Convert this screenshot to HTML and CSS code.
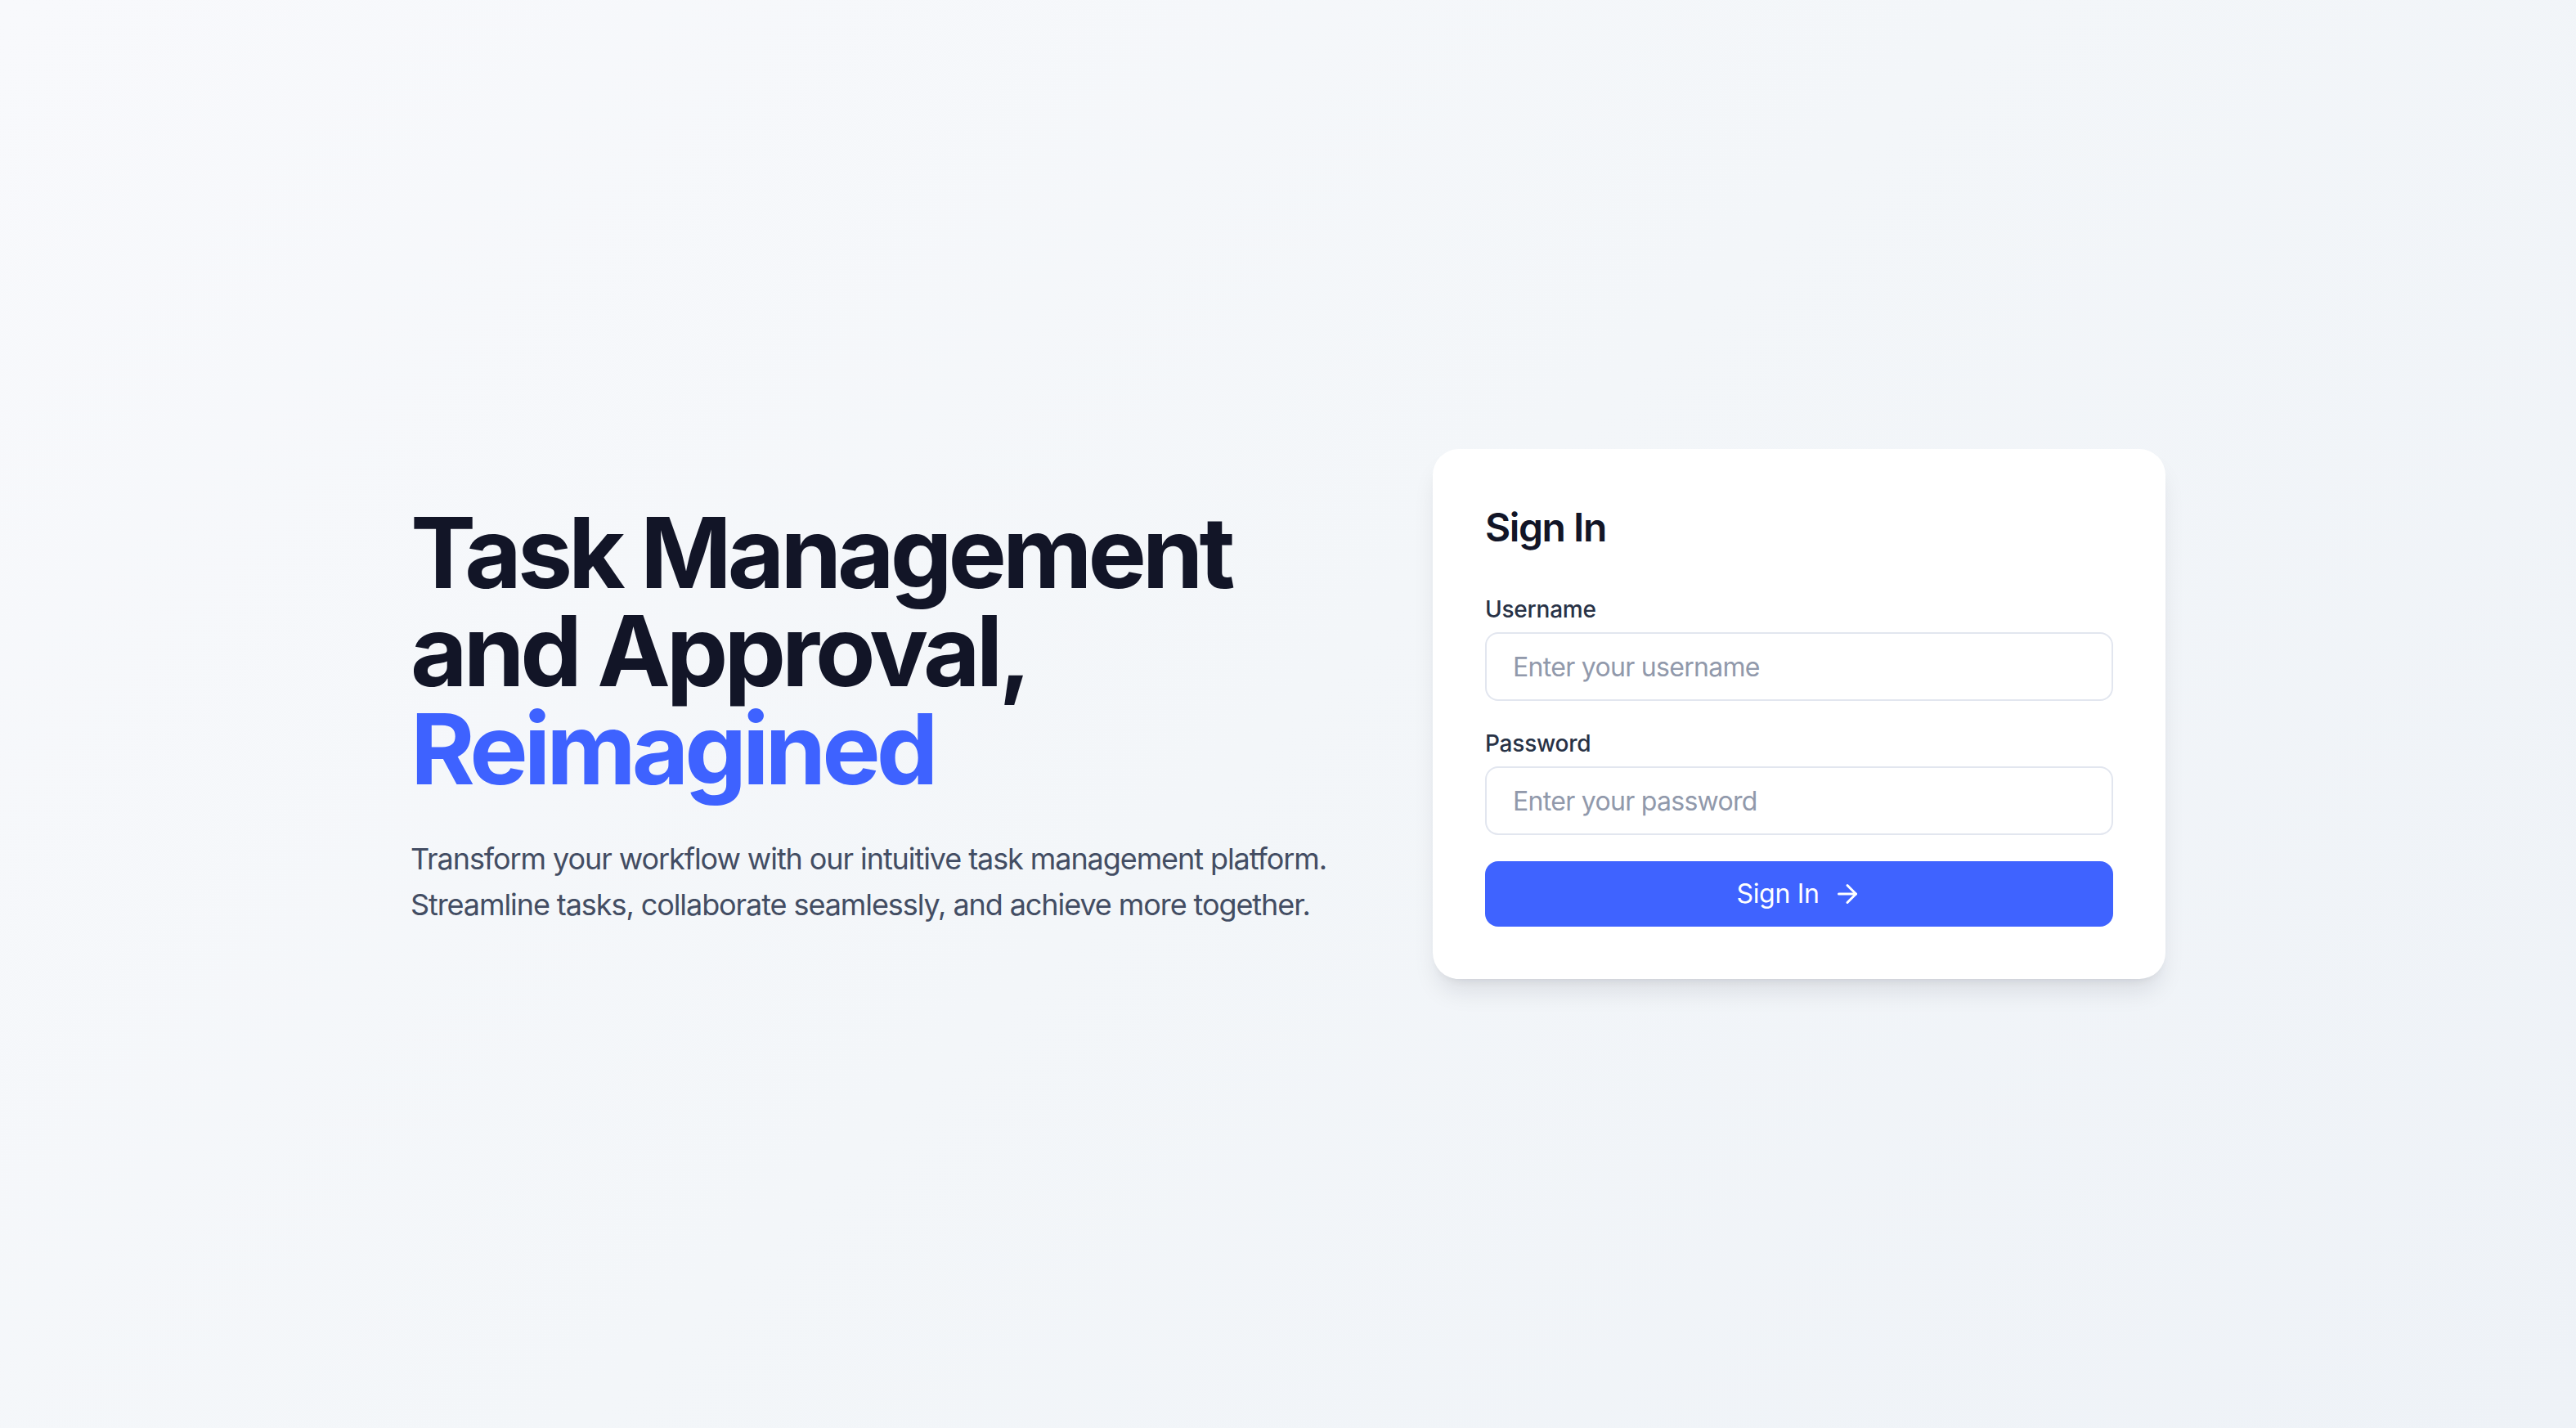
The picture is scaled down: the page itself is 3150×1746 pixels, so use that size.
FILE: index.html
```html
<!DOCTYPE html>
<html lang="en">
<head>
<meta charset="utf-8">
<title>Task Management</title>
<link rel="stylesheet" href="styles.css">
</head>
<body>
<main class="page">
  <div class="container">
    <section class="hero">
      <h1 class="hero-title">Task Management<br>and Approval,<br><span class="accent">Reimagined</span></h1>
      <p class="hero-text">Transform your workflow with our intuitive task management platform.<br>Streamline tasks, collaborate seamlessly, and achieve more together.</p>
    </section>
    <section class="card">
      <h2 class="card-title">Sign In</h2>
      <form class="form">
        <div class="field">
          <label class="label" for="username">Username</label>
          <input class="input" id="username" type="text" placeholder="Enter your username">
        </div>
        <div class="field">
          <label class="label" for="password">Password</label>
          <input class="input" id="password" type="password" placeholder="Enter your password">
        </div>
        <button class="button" type="button">
          <span>Sign In</span>
          <svg class="arrow" viewBox="0 0 24 24" fill="none" stroke="currentColor" stroke-width="2" stroke-linecap="round" stroke-linejoin="round"><path d="M5 12h14"/><path d="m12 5 7 7-7 7"/></svg>
        </button>
      </form>
    </section>
  </div>
</main>
</body>
</html>
```

FILE: styles.css
```css
* { box-sizing: border-box; }
html, body { margin: 0; padding: 0; }
body {
  font-family: Inter, "Noto Sans", "Liberation Sans", sans-serif;
  background: linear-gradient(135deg, #f8f9fc 0%, #f3f6f9 50%, #eef2f7 100%);
  min-height: 100vh;
}
.page {
  min-height: 100vh;
  display: flex;
  align-items: center;
  justify-content: center;
}
.container {
  width: 2146px;
  display: flex;
  align-items: center;
  justify-content: space-between;
}
.hero { width: 1180px; padding-top: 4px; }
.hero-title {
  margin: 0;
  font-size: 120px;
  line-height: 120px;
  font-weight: 700;
  letter-spacing: -0.042em;
  color: #121527;
  white-space: nowrap;
}
.accent { color: #3e62ff; }
.hero-text {
  margin: 46px 0 0;
  font-size: 36px;
  line-height: 56px;
  letter-spacing: -0.03em;
  color: #434d63;
  white-space: nowrap;
}
.card {
  width: 896px;
  background: #fff;
  border-radius: 32px;
  padding: 64px;
  box-shadow: 0 20px 30px -6px rgba(15, 23, 42, 0.10), 0 8px 12px -8px rgba(15, 23, 42, 0.10);
}
.card-title {
  margin: 0 0 48px;
  font-size: 48px;
  line-height: 64px;
  font-weight: 600;
  letter-spacing: -0.03em;
  color: #121527;
}
.form { display: flex; flex-direction: column; gap: 32px; }
.field { display: flex; flex-direction: column; gap: 8px; }
.label {
  font-size: 28px;
  line-height: 40px;
  font-weight: 500;
  letter-spacing: -0.008em;
  color: #283246;
}
.input {
  font-family: inherit;
  font-size: 32px;
  line-height: 48px;
  letter-spacing: -0.022em;
  height: 84px;
  padding: 16px 32px;
  border: 2px solid #e2e6ef;
  border-radius: 16px;
  background: #fff;
  color: #121527;
  outline: none;
}
.input::placeholder { color: #9199ab; }
.button {
  font-family: inherit;
  height: 80px;
  border: none;
  border-radius: 16px;
  background: #3f63ff;
  color: #fff;
  font-size: 32px;
  line-height: 48px;
  font-weight: 400;
  letter-spacing: -0.01em;
  display: flex;
  align-items: center;
  justify-content: center;
  gap: 16px;
  cursor: pointer;
}
.arrow { width: 36px; height: 36px; }
```
